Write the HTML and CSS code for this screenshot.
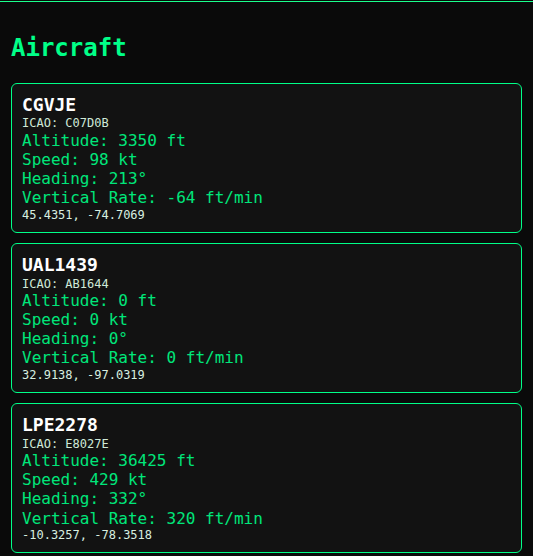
FILE: index.html
```html
<!DOCTYPE html>
<html>
<head>
<meta charset="utf-8">
<title>Aircraft</title>
<link rel="stylesheet" href="styles.css">
</head>
<body>
  <div class="topbar"></div>
  <main class="content">
    <h2 class="title">Aircraft</h2>
    <div class="list">
      <div class="plane">
        <div class="callsign">CGVJE</div>
        <div class="icao">ICAO: C07D0B</div>
        <div class="field">Altitude: 3350 ft</div>
        <div class="field">Speed: 98 kt</div>
        <div class="field">Heading: 213°</div>
        <div class="field">Vertical Rate: -64 ft/min</div>
        <div class="coords">45.4351, -74.7069</div>
      </div>
      <div class="plane">
        <div class="callsign">UAL1439</div>
        <div class="icao">ICAO: AB1644</div>
        <div class="field">Altitude: 0 ft</div>
        <div class="field">Speed: 0 kt</div>
        <div class="field">Heading: 0°</div>
        <div class="field">Vertical Rate: 0 ft/min</div>
        <div class="coords">32.9138, -97.0319</div>
      </div>
      <div class="plane">
        <div class="callsign">LPE2278</div>
        <div class="icao">ICAO: E8027E</div>
        <div class="field">Altitude: 36425 ft</div>
        <div class="field">Speed: 429 kt</div>
        <div class="field">Heading: 332°</div>
        <div class="field">Vertical Rate: 320 ft/min</div>
        <div class="coords">-10.3257, -78.3518</div>
      </div>
    </div>
  </main>
</body>
</html>
```
FILE: styles.css
```css
html, body {margin: 0; padding: 0;}
body {
  background: #0a0a0a;
  font-family: "DejaVu Sans Mono", monospace;
  line-height: 1.2;
  color: #00ff88;
}

/* thin accent line above the panel */
.topbar {height: 1px; margin-top: 1px; background: #1aff8c;}

.content {padding: 0 11px;}

.title {
  margin: 0; padding: 32px 0 20px 0;
  font-size: 24px; font-weight: bold; color: #00ff88;
}

.list {display: flex; flex-direction: column; gap: 10px;}

.plane {
  background: #121212;
  border: 1px solid #00ff88;
  border-radius: 6px;
  padding: 10px;
}

.callsign {font-size: 18px; font-weight: bold; color: #fff; margin-bottom: 1px;}
.icao {font-size: 12px; color: #cfe9d8;}
.field {font-size: 16px; color: #00e67a;}
.coords {font-size: 12px; color: #d8efe0;}
```
